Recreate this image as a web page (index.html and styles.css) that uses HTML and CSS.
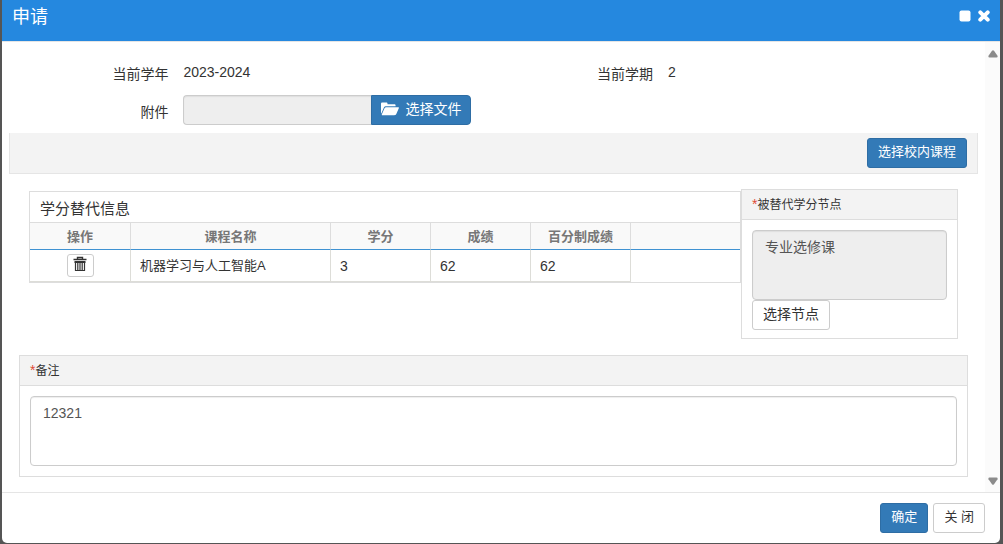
FILE: index.html
```html
<!DOCTYPE html>
<html lang="zh-CN">
<head>
<meta charset="utf-8">
<title>申请</title>
<link rel="stylesheet" href="styles.css">
</head>
<body>
<main class="dialog">
  <header class="dialog-header">
    <h1 class="dialog-title">申请</h1>
    <div class="window-tools">
      <button type="button" class="tool" aria-label="最大化">
        <svg width="12" height="12" viewBox="0 0 12 12"><rect x="0.5" y="0.5" width="11" height="11" rx="2" fill="currentColor"/></svg>
      </button>
      <button type="button" class="tool" aria-label="关闭窗口">
        <svg width="12" height="12" viewBox="0 0 12 12"><path d="M2.300 2.300 9.700 9.700M9.700 2.300 2.300 9.700" stroke="currentColor" stroke-width="4"  stroke-linecap="round"/></svg>
      </button>
    </div>
  </header>

  <div class="dialog-body">
    <div class="content">
      <form class="info" id="apply">
        <div class="field">
          <span class="field-label">当前学年</span>
          <span class="field-value">2023-2024</span>
        </div>
        <div class="field">
          <span class="field-label">当前学期</span>
          <span class="field-value">2</span>
        </div>
        <div class="field field-file">
          <label class="field-label" for="file">附件</label>
          <div class="file-group">
            <input class="file-name" id="file" type="text" readonly>
            <button type="button" class="btn btn-primary btn-file">
              <svg width="18" height="14" viewBox="0 0 18 14" fill="currentColor"><path d="M0 11.6V1.8C0 1 .6.5 1.3.5h4c.8 0 1.200.5 1.200 1.200v.5h6.800c.8 0 1.300.5 1.300 1.200v.8H5.200c-1 0-1.900.5-2.300 1.300L.4 11.200Z"/><path d="M5.400 5.200h11.900c.6 0 .8.4.6.9l-2.600 6c-.4.800-1.200 1.200-1.900 1.200H1.500c-.7 0-.9-.4-.6-1l2.600-6c.3-.7 1.100-1.100 1.900-1.100Z"/></svg>
              <span>选择文件</span>
            </button>
          </div>
        </div>
      </form>

      <div class="toolbar">
        <button type="button" class="btn btn-primary">选择校内课程</button>
      </div>

      <div class="columns">
        <section class="grid-panel">
          <h2 class="grid-title">学分替代信息</h2>
          <table class="grid">
            <colgroup><col class="w-action"><col class="w-name"><col class="w-num"><col class="w-num"><col class="w-num"><col></colgroup>
            <thead>
              <tr><th>操作</th><th>课程名称</th><th>学分</th><th>成绩</th><th>百分制成绩</th><td></td></tr>
            </thead>
            <tbody>
              <tr>
                <td class="center">
                  <button type="button" class="btn-icon" aria-label="删除">
                    <svg width="14" height="16" viewBox="0 0 14 16"><path d="M4.500 3V1.500h5V3M.5 3.500h13" fill="none" stroke="currentColor" stroke-width="1.400"/><path d="M1.500 5h11v2h-11Z" fill="currentColor"/><path d="M2.500 6v8.500h9V6M4.800 6v8M7 6v8M9.200 6v8" fill="none" stroke="currentColor" stroke-width="1.200"/></svg>
                  </button>
                </td>
                <td>机器学习与人工智能A</td><td class="num">3</td><td class="num">62</td><td class="num">62</td><td class="rest"></td>
              </tr>
            </tbody>
          </table>
        </section>

        <section class="box node-box">
          <label class="box-title" for="node"><span class="star">*</span>被替代学分节点</label>
          <div class="box-body">
            <textarea class="area" id="node" readonly>专业选修课</textarea>
            <button type="button" class="btn btn-default btn-node">选择节点</button>
          </div>
        </section>
      </div>

      <section class="box remark-box">
        <label class="box-title" for="remark"><span class="star">*</span>备注</label>
        <div class="box-body">
          <textarea class="area" id="remark">12321</textarea>
        </div>
      </section>
    </div>
    <div class="scrollbar" aria-hidden="true">
      <svg width="10" height="8" viewBox="0 0 10 8"><path d="M4 .7q1-1 2 0l3.500 5Q10 7.500 8.500 7.500h-7Q0 7.500.5 5.700Z" fill="#8b8b8b"/></svg>
      <svg width="10" height="8" viewBox="0 0 10 8"><path d="M4 7.300q1 1 2 0l3.500-5Q10 .5 8.500.5h-7Q0 .5.5 2.300Z" fill="#8b8b8b"/></svg>
    </div>
  </div>

  <footer class="dialog-footer">
    <button type="submit" form="apply" class="btn btn-primary">确定</button>
    <button type="button" class="btn btn-default">关 闭</button>
  </footer>
</main>
</body>
</html>
```

FILE: styles.css
```css
* { box-sizing: border-box; }

body {
  margin: 0;
  min-height: 100vh;
  display: flex;
  padding: 0 3px 1px 2px;
  background: #555;
  color: #333;
  font: 14px/20px "Liberation Sans", "Noto Sans CJK SC", sans-serif;
}

button, input, textarea { font: inherit; color: inherit; margin: 0; }
button { cursor: pointer; }
svg { display: block; }

.dialog {
  flex: 1;
  min-width: 0;
  display: flex;
  flex-direction: column;
  background: #fff;
  border-radius: 0 0 5px 5px;
}

.dialog-header {
  display: flex;
  justify-content: space-between;
  align-items: flex-start;
  height: 42px;
  padding: 4px 10px;
  background: #2588df;
  border-bottom: 1px solid #e5e5e5;
  color: #fff;
}
.dialog-title { margin: 0; font-size: 18px; font-weight: 400; line-height: 26px; }
.window-tools { display: flex; gap: 7px; padding-top: 6px; }
.tool { padding: 0; border: 0; background: none; color: #fff; }

.dialog-body { flex: 1; display: flex; }
.content { flex: 1; min-width: 0; padding: 20px 7px 15px; }
.scrollbar {
  width: 15px;
  padding: 8px 2px 7px 3px;
  display: flex;
  flex-direction: column;
  justify-content: space-between;
  background: #fbfbfb;
}

.info { display: grid; grid-template-columns: 1fr 1fr; row-gap: 11px; padding-bottom: 8px; }
.field { display: flex; }
.field-label { width: 36%; padding: 2px 15px 0 0; text-align: right; }
.field-file .field-label { padding-top: 7px; }
.file-group { display: flex; width: 288px; }
.file-name {
  flex: 1;
  min-width: 0;
  height: 30px;
  border: 1px solid #ccc;
  border-right: 0;
  border-radius: 4px 0 0 4px;
  background: #eee;
  box-shadow: inset 0 1px 1px #dedede;
}

.btn {
  height: 30px;
  padding: 0 10px 2px;
  border: 1px solid #ccc;
  border-radius: 3px;
  background: #fff;
  font-size: 13px;
  line-height: 18px;
  white-space: nowrap;
}
.btn-primary { background: #337ab7; border-color: #2e6da4; color: #fff; }
.btn-file {
  display: flex;
  align-items: center;
  gap: 6px;
  padding: 0 9px 2px;
  border-radius: 0 4px 4px 0;
  font-size: 14px;
}

.toolbar {
  display: flex;
  justify-content: flex-end;
  padding: 5px 10px;
  background: #f3f3f3;
  border: 1px solid #e5e5e5;
  border-top: 0;
}

.columns { display: flex; align-items: flex-start; padding: 15px 20px 16px; }

.grid-panel { flex: 1; min-width: 0; margin-top: 2px; border: 1px solid #ddd; }
.grid-title { margin: 0; padding: 7px 10px 3px; font-size: 15px; font-weight: 400; line-height: 20px; }
.grid { width: 100%; table-layout: fixed; border-collapse: separate; border-spacing: 0; font-size: 13px; line-height: 20px; }
.w-action, .w-num { width: 100px; }
.w-name { width: 200px; }
.w-action { width: 101px; }
.grid thead th, .grid thead td {
  height: 28px;
  padding: 1px 0 0;
  background: #f9f9f9;
  border-top: 1px solid #ddd;
  border-bottom: 1px solid #3f92d2;
  color: #777;
}
.grid th { border-right: 1px solid #ddd; }
.grid tbody td { height: 32px; padding: 0 9px; border-right: 1px solid #ddddd8; border-bottom: 1px solid #ddddd8; }
.grid tbody .rest { border: 0; }
.grid .num { font-size: 14px; }
.grid .center { text-align: center; }
.btn-icon {
  display: inline-flex;
  align-items: center;
  justify-content: center;
  width: 27px;
  height: 23px;
  padding: 0 0 3px;
  border: 1px solid #ccc;
  border-radius: 3px;
  background: #fff;
  vertical-align: middle;
}

.box { border: 1px solid #ddd; background: #fff; }
.box-title {
  display: block;
  padding: 5px 10px 4px;
  background: #f3f3f3;
  border-bottom: 1px solid #ddd;
  font-size: 12px;
  line-height: 20px;
}
.star { color: #e04b33; font-size: 14px; line-height: 1; }
.box-body { padding: 10px; }
.area {
  display: block;
  width: 100%;
  height: 70px;
  padding: 6px 12px;
  border: 1px solid #ccc;
  border-radius: 4px;
  background: #fff;
  box-shadow: inset 0 1px 1px #eee;
  color: #555;
  resize: none;
}
.area[readonly] { background: #eee; box-shadow: inset 0 1px 1px #dedede; }
.node-box { flex: 0 0 217px; }
.node-box .box-body { padding-bottom: 8px; }
.btn-node { display: block; font-size: 14px; }
.remark-box { margin: 0 10px; }

.dialog-footer {
  display: flex;
  justify-content: flex-end;
  gap: 5px;
  padding: 10px 15px;
  border-top: 1px solid #e5e5e5;
}
```
